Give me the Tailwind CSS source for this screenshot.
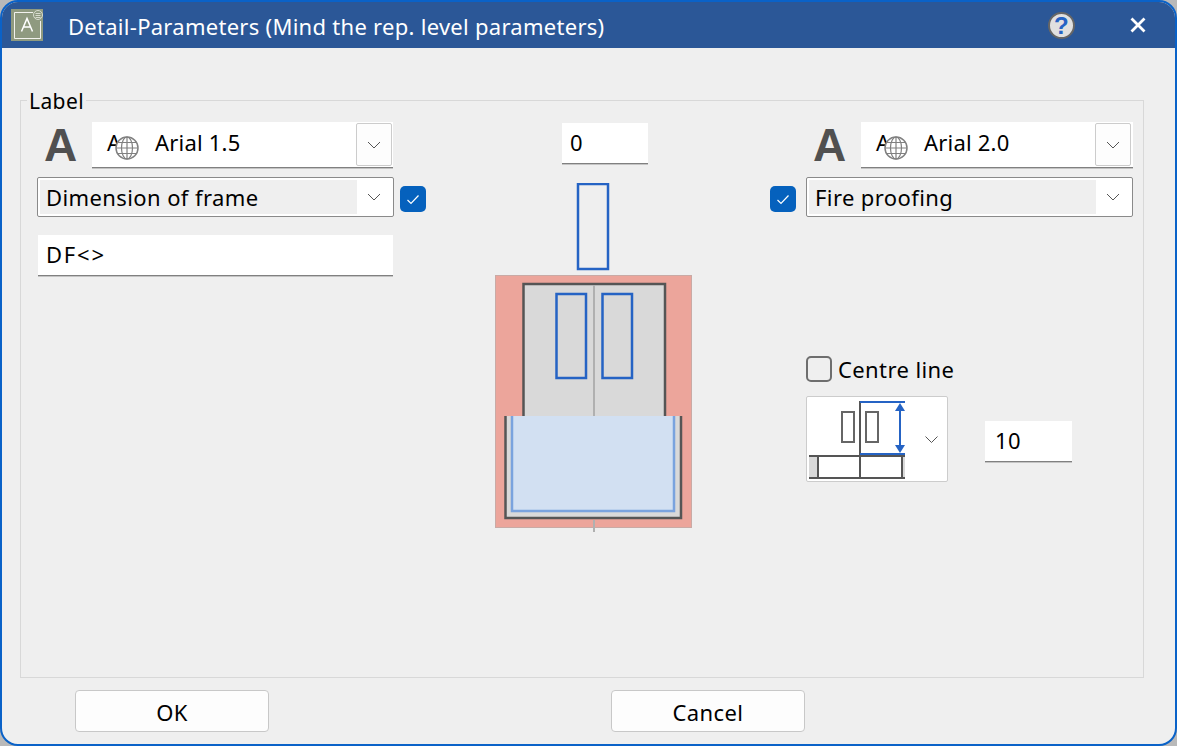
<!DOCTYPE html>
<html lang="en">
<head>
  <meta charset="UTF-8" />
  <title>Detail-Parameters</title>
  <script src="https://cdn.jsdelivr.net/npm/@tailwindcss/browser@4"></script>
</head>
<body class="bg-[#b9b9b9] overflow-hidden font-['Noto_Sans','Open_Sans',sans-serif] text-[22px] tracking-[0.4px] text-black">
  <div class="w-[1177px] h-[746px] flex flex-col bg-[#efefef] border-2 border-[#0a62c8] rounded-[18px] overflow-hidden">

    <!-- title bar -->
    <div class="h-[46px] shrink-0 bg-[#2b5797] flex items-center text-white relative">
      <svg class="ml-[9px] w-[32px] h-[32px] shrink-0" viewBox="0 0 32 32">
        <rect width="32" height="32" fill="#8f9a80" />
        <path d="M22 3.500H3.500V29.500H29.500V12" fill="none" stroke="#f2f2ee" stroke-width="1" />
        <path d="M10.500 22.500L16 9.500L21.500 22.500M12.500 18H19.500" fill="none" stroke="#fff" stroke-width="1.500" />
        <circle cx="27" cy="6" r="4.500" fill="none" stroke="#d8dccf" stroke-width="1" />
        <path d="M24.500 4.500h5M24.500 6.500h5M24.500 8.500h5" stroke="#d8dccf" stroke-width="1" />
      </svg>
      <span class="ml-[25px] pt-[2px] text-[22px] tracking-[0.28px] whitespace-nowrap">Detail-Parameters (Mind the rep. level parameters)</span>
      <div class="absolute left-[1046px] top-[10px] w-[27px] h-[27px] rounded-full bg-[#e0e0e0] border-2 border-[#666] flex items-center justify-center text-[#2563c4] font-bold text-[24px] leading-none font-['Liberation_Sans',sans-serif]">?</div>
      <svg class="absolute left-[1128px] top-[15px] w-[16px] h-[16px]" viewBox="0 0 16 16">
        <path d="M1.500 1.500L14.500 14.500M14.500 1.500L1.500 14.500" stroke="#fff" stroke-width="2.800" />
      </svg>
    </div>

    <!-- group box -->
    <div class="relative mt-[52px] ml-[18px] w-[1124px] h-[578px] border border-[#d8d8d8] flex shrink-0">
      <span class="absolute left-[6px] top-[-13px] bg-[#efefef] px-[2px] leading-[26px] text-[21px]">Label</span>

      <!-- left column -->
      <div class="ml-[16px] w-[390px] shrink-0">
        <div class="mt-[21px] flex h-[46px]">
          <span class="ml-[7px] w-[48px] font-['Liberation_Sans',sans-serif] font-bold text-[46px] leading-[46px] text-[#505050]">A</span>
          <div class="relative w-[301px] h-[46px] bg-white border-b border-[#808080] shadow-[0_1px_0_#c4c4c4]">
            <span class="absolute left-[15px] top-[5px] leading-[30px]">A</span>
            <svg class="absolute left-[23px] top-[14px] w-[24px] h-[24px]" viewBox="0 0 24 24">
              <g fill="none" stroke="#808080" stroke-width="1.500">
                <circle cx="12" cy="12" r="11" fill="#fff" />
                <ellipse cx="12" cy="12" rx="5.500" ry="11" stroke-width="1.200" />
                <path d="M12 1V23M1 12H23M2.500 6.500H21.500M2.500 17.500H21.500" stroke-width="1.200" />
              </g>
            </svg>
            <span class="absolute left-[63px] top-[4px] leading-[32px] tracking-[0.2px]">Arial 1.5</span>
            <div class="absolute left-[264px] top-[1px] w-[36px] h-[43px] bg-[#fdfdfd] border border-[#cccccc] rounded-[2px] flex items-center justify-center">
              <svg class="w-[14px] h-[8px]" viewBox="0 0 14 8"><path d="M1 1L7 7L13 1" fill="none" stroke="#555" stroke-width="1" /></svg>
            </div>
          </div>
        </div>

        <div class="mt-[9px] flex">
          <div class="w-[357px] h-[40px] bg-white border border-[#8a8a8a] rounded-[2px] p-[2px] flex">
            <div class="w-[317px] bg-[#efefef] pl-[6px] leading-[34px] whitespace-nowrap">Dimension of frame</div>
            <div class="flex-1 flex items-center justify-center">
              <svg class="w-[14px] h-[8px]" viewBox="0 0 14 8"><path d="M1 1L7 7L13 1" fill="none" stroke="#555" stroke-width="1" /></svg>
            </div>
          </div>
          <div class="ml-[6px] mt-[9px] w-[26px] h-[26px] rounded-[5px] bg-[#0561bd] flex items-center justify-center">
            <svg class="w-[14px] h-[11px]" viewBox="0 0 14 11"><path d="M1.500 6L5 9.500L12.500 1.500" fill="none" stroke="#fff" stroke-width="1.200" /></svg>
          </div>
        </div>

        <div class="mt-[18px] ml-[1px] w-[355px] h-[41px] bg-white border-b border-[#808080] shadow-[0_1px_0_#c4c4c4] pl-[8px] leading-[38px] tracking-[1.800px]">DF&lt;&gt;</div>
      </div>

      <!-- centre column -->
      <div class="ml-[68px] w-[197px] shrink-0">
        <div class="mt-[22px] ml-[67px] w-[86px] h-[41px] bg-white border-b border-[#808080] shadow-[0_1px_0_#c4c4c4] pl-[8px] leading-[38px]">0</div>
        <svg class="mt-[19px] block" width="197" height="349" viewBox="495 183 197 349">
          <rect x="578" y="184" width="30" height="85" fill="#efefef" stroke="#2563c4" stroke-width="2.500" />
          <rect x="495.500" y="275.500" width="196" height="252" fill="#eca59b" stroke="#c9aaa5" />
          <rect x="523.500" y="284" width="141.500" height="140" fill="#d9d9d9" stroke="#555" stroke-width="2.500" />
          <path d="M594 285V416" stroke="#b0b0b0" stroke-width="2" />
          <rect x="556.500" y="294" width="29.500" height="84" fill="#d9d9d9" stroke="#2563c4" stroke-width="2.500" />
          <rect x="602.500" y="294" width="29.500" height="84" fill="#d9d9d9" stroke="#2563c4" stroke-width="2.500" />
          <rect x="505" y="416" width="177" height="103" fill="#d9d9d9" />
          <path d="M505.500 416V518H681V416" fill="none" stroke="#555" stroke-width="2.500" />
          <path d="M512 416V511H674V416" fill="#d2e0f2" stroke="#7aa3de" stroke-width="2.500" />
          <path d="M594 520V532" stroke="#b0b0b0" stroke-width="2" />
        </svg>
      </div>

      <!-- right column -->
      <div class="ml-[78px] w-[363px] shrink-0">
        <div class="mt-[21px] ml-[43px] flex h-[46px]">
          <span class="w-[48px] font-['Liberation_Sans',sans-serif] font-bold text-[46px] leading-[46px] text-[#505050]">A</span>
          <div class="relative w-[272px] h-[46px] bg-white border-b border-[#808080] shadow-[0_1px_0_#c4c4c4]">
            <span class="absolute left-[15px] top-[5px] leading-[30px]">A</span>
            <svg class="absolute left-[23px] top-[14px] w-[24px] h-[24px]" viewBox="0 0 24 24">
              <g fill="none" stroke="#808080" stroke-width="1.500">
                <circle cx="12" cy="12" r="11" fill="#fff" />
                <ellipse cx="12" cy="12" rx="5.500" ry="11" stroke-width="1.200" />
                <path d="M12 1V23M1 12H23M2.500 6.500H21.500M2.500 17.500H21.500" stroke-width="1.200" />
              </g>
            </svg>
            <span class="absolute left-[63px] top-[4px] leading-[32px] tracking-[0.2px]">Arial 2.0</span>
            <div class="absolute left-[234px] top-[1px] w-[36px] h-[43px] bg-[#fdfdfd] border border-[#cccccc] rounded-[2px] flex items-center justify-center">
              <svg class="w-[14px] h-[8px]" viewBox="0 0 14 8"><path d="M1 1L7 7L13 1" fill="none" stroke="#555" stroke-width="1" /></svg>
            </div>
          </div>
        </div>

        <div class="mt-[9px] flex">
          <div class="mt-[9px] w-[26px] h-[26px] rounded-[5px] bg-[#0561bd] flex items-center justify-center">
            <svg class="w-[14px] h-[11px]" viewBox="0 0 14 11"><path d="M1.500 6L5 9.500L12.500 1.500" fill="none" stroke="#fff" stroke-width="1.200" /></svg>
          </div>
          <div class="ml-[10px] w-[327px] h-[40px] bg-white border border-[#8a8a8a] rounded-[2px] p-[2px] flex">
            <div class="w-[287px] bg-[#efefef] pl-[6px] leading-[34px] whitespace-nowrap">Fire proofing</div>
            <div class="flex-1 flex items-center justify-center">
              <svg class="w-[14px] h-[8px]" viewBox="0 0 14 8"><path d="M1 1L7 7L13 1" fill="none" stroke="#555" stroke-width="1" /></svg>
            </div>
          </div>
        </div>

        <div class="mt-[139px] ml-[36px] flex items-center h-[26px]">
          <div class="w-[26px] h-[26px] rounded-[5px] bg-[#efefef] border-2 border-[#6e6e6e]"></div>
          <span class="ml-[6px] whitespace-nowrap">Centre line</span>
        </div>

        <div class="mt-[14px] ml-[36px] flex items-start">
          <div class="w-[142px] h-[86px] bg-white border border-[#cccccc] rounded-[2px]">
            <svg class="block" width="140" height="84" viewBox="807 397 140 84">
              <rect x="809" y="456" width="9" height="22" fill="#d9d9d9" />
              <rect x="903" y="456" width="2" height="22" fill="#d9d9d9" />
              <path d="M860 401V478M809 456H905M809 478H905M818 456V478M902 456V478" fill="none" stroke="#555" stroke-width="2" />
              <rect x="842" y="412" width="12" height="30" fill="none" stroke="#666" stroke-width="2" />
              <rect x="866" y="412" width="12" height="30" fill="none" stroke="#666" stroke-width="2" />
              <path d="M860 402H905M860 454H905M900 408V448" fill="none" stroke="#2563c4" stroke-width="2" />
              <path d="M900 403L905 411H895ZM900 453L905 445H895Z" fill="#2563c4" />
              <path d="M925.500 436.500L931.500 442.500L937.500 436.500" fill="none" stroke="#555" stroke-width="1" />
            </svg>
          </div>
          <div class="ml-[37px] mt-[25px] w-[87px] h-[41px] bg-white border-b border-[#808080] shadow-[0_1px_0_#c4c4c4] pl-[10px] leading-[38px]">10</div>
        </div>
      </div>
    </div>

    <!-- buttons -->
    <div class="mt-[12px] ml-[73px] flex gap-[342px]">
      <button class="w-[194px] h-[42px] pt-[2px] bg-[#fdfdfd] border border-[#c8c8c8] rounded-[4px] text-[22px]">OK</button>
      <button class="w-[194px] h-[42px] pt-[2px] bg-[#fdfdfd] border border-[#c8c8c8] rounded-[4px] text-[22px]">Cancel</button>
    </div>
  </div>
</body>
</html>
